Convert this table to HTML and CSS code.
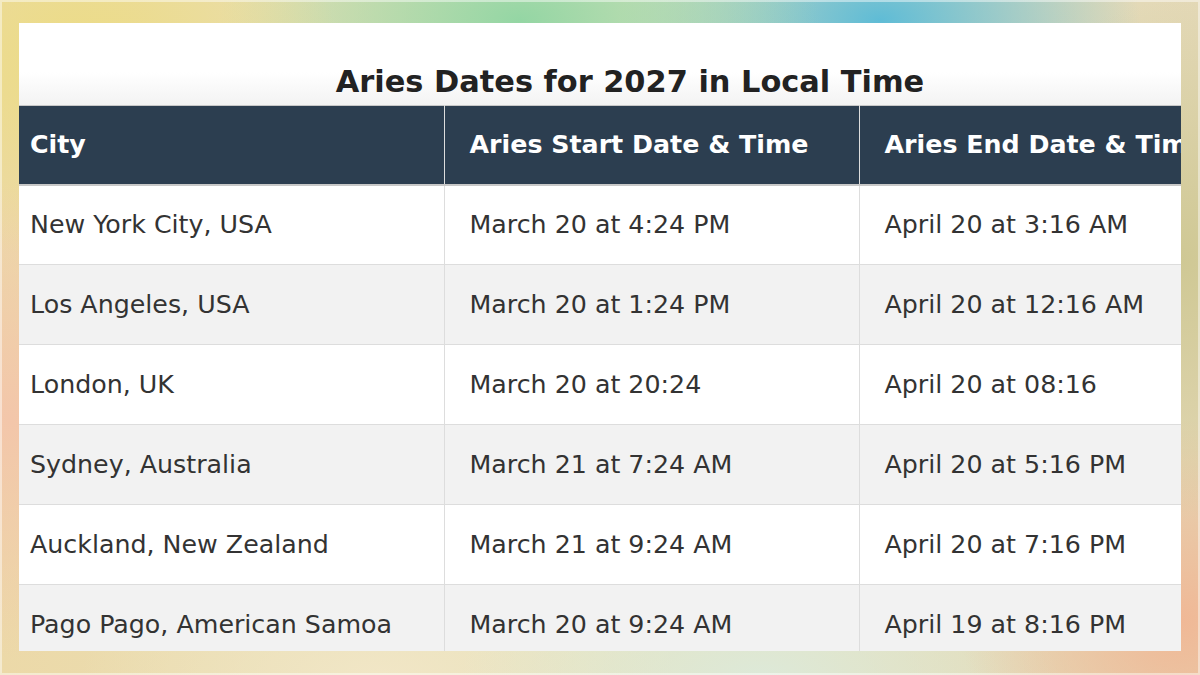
FILE: index.html
```html
<!DOCTYPE html>
<html lang="en">
<head>
<meta charset="utf-8">
<title>Aries Dates for 2027 in Local Time</title>
<link rel="stylesheet" href="styles.css">
</head>
<body>
<div class="frame">
  <main class="card">
    <div class="inner">
      <h2 class="title">Aries Dates for 2027 in Local Time</h2>
      <table class="dates">
        <colgroup>
          <col class="c1"><col class="c2"><col class="c3">
        </colgroup>
        <thead>
          <tr><th class="first">City</th><th>Aries Start Date &amp; Time</th><th>Aries End Date &amp; Time</th></tr>
        </thead>
        <tbody>
          <tr><td class="first">New York City, USA</td><td>March 20 at 4:24 PM</td><td>April 20 at 3:16 AM</td></tr>
          <tr><td class="first">Los Angeles, USA</td><td>March 20 at 1:24 PM</td><td>April 20 at 12:16 AM</td></tr>
          <tr><td class="first">London, UK</td><td>March 20 at 20:24</td><td>April 20 at 08:16</td></tr>
          <tr><td class="first">Sydney, Australia</td><td>March 21 at 7:24 AM</td><td>April 20 at 5:16 PM</td></tr>
          <tr><td class="first">Auckland, New Zealand</td><td>March 21 at 9:24 AM</td><td>April 20 at 7:16 PM</td></tr>
          <tr><td class="first">Pago Pago, American Samoa</td><td>March 20 at 9:24 AM</td><td>April 19 at 8:16 PM</td></tr>
        </tbody>
      </table>
    </div>
  </main>
</div>
</body>
</html>
```

FILE: styles.css
```css
html, body {
  margin: 0;
  padding: 0;
  width: 1200px;
  height: 675px;
  overflow: hidden;
}

body {
  font-family: "DejaVu Sans", "Liberation Sans", sans-serif;
  background:
    radial-gradient(ellipse 260px 200px at 80px 60px, #ecdc84 0%, rgba(236,220,132,0) 100%),
    radial-gradient(ellipse 300px 160px at 520px 20px, #94d6a4 0%, rgba(148,214,164,0) 100%),
    radial-gradient(ellipse 260px 140px at 880px 20px, #5fbcd6 0%, rgba(95,188,214,0) 100%),
    radial-gradient(ellipse 220px 260px at 1180px 260px, #cfc894 0%, rgba(207,200,148,0) 100%),
    radial-gradient(ellipse 220px 200px at 1180px 620px, #f0b896 0%, rgba(240,184,150,0) 100%),
    radial-gradient(ellipse 200px 240px at 10px 420px, #f3c6aa 0%, rgba(243,198,170,0) 100%),
    radial-gradient(ellipse 300px 120px at 760px 675px, #dde9d8 0%, rgba(221,233,216,0) 100%),
    radial-gradient(ellipse 300px 120px at 380px 675px, #f1e6c6 0%, rgba(241,230,198,0) 100%),
    linear-gradient(90deg, #ecd9a8 0%, #e6e4c0 50%, #e3d8b6 100%);
}

.frame {
  box-sizing: border-box;
  width: 1200px;
  height: 675px;
  padding: 23px 19px 24px 19px;
  border: 2px solid rgba(255,255,255,0.45);
}

.card {
  box-sizing: border-box;
  margin: -2px;
  height: 628px;
  background: #ffffff;
  overflow: hidden;
}

.inner {
  width: 1222px;
}

.title {
  margin: 0;
  height: 82px;
  box-sizing: border-box;
  padding-top: 41px;
  text-align: center;
  font-size: 30.4px;
  font-weight: bold;
  line-height: 36px;
  color: #222222;
  background: linear-gradient(180deg, #ffffff 0%, #ffffff 60%, #f3f3f3 100%);
}

.dates {
  border-collapse: collapse;
  table-layout: fixed;
  width: 1222px;
  font-size: 25.3px;
  color: #333333;
}

.c1 { width: 425px; }
.c2 { width: 415px; }
.c3 { width: 382px; }

.dates th,
.dates td {
  text-align: left;
  white-space: nowrap;
  overflow: hidden;
  padding: 0 0 0 25px;
  border: 1px solid #dddddd;
}

.dates th.first,
.dates td.first {
  padding-left: 11px;
  border-left: none;
}

.dates thead tr {
  height: 79px;
}

.dates th {
  background: #2c3e50;
  color: #ffffff;
  font-weight: bold;
  border-top: 1px solid #c8c8c8;
  border-bottom: 2px solid #c8c8c8;
  border-left: 1px solid #c8c8c8;
}

.dates tbody tr {
  height: 80px;
}

.dates tbody tr:nth-child(even) td {
  background: #f2f2f2;
}
```
